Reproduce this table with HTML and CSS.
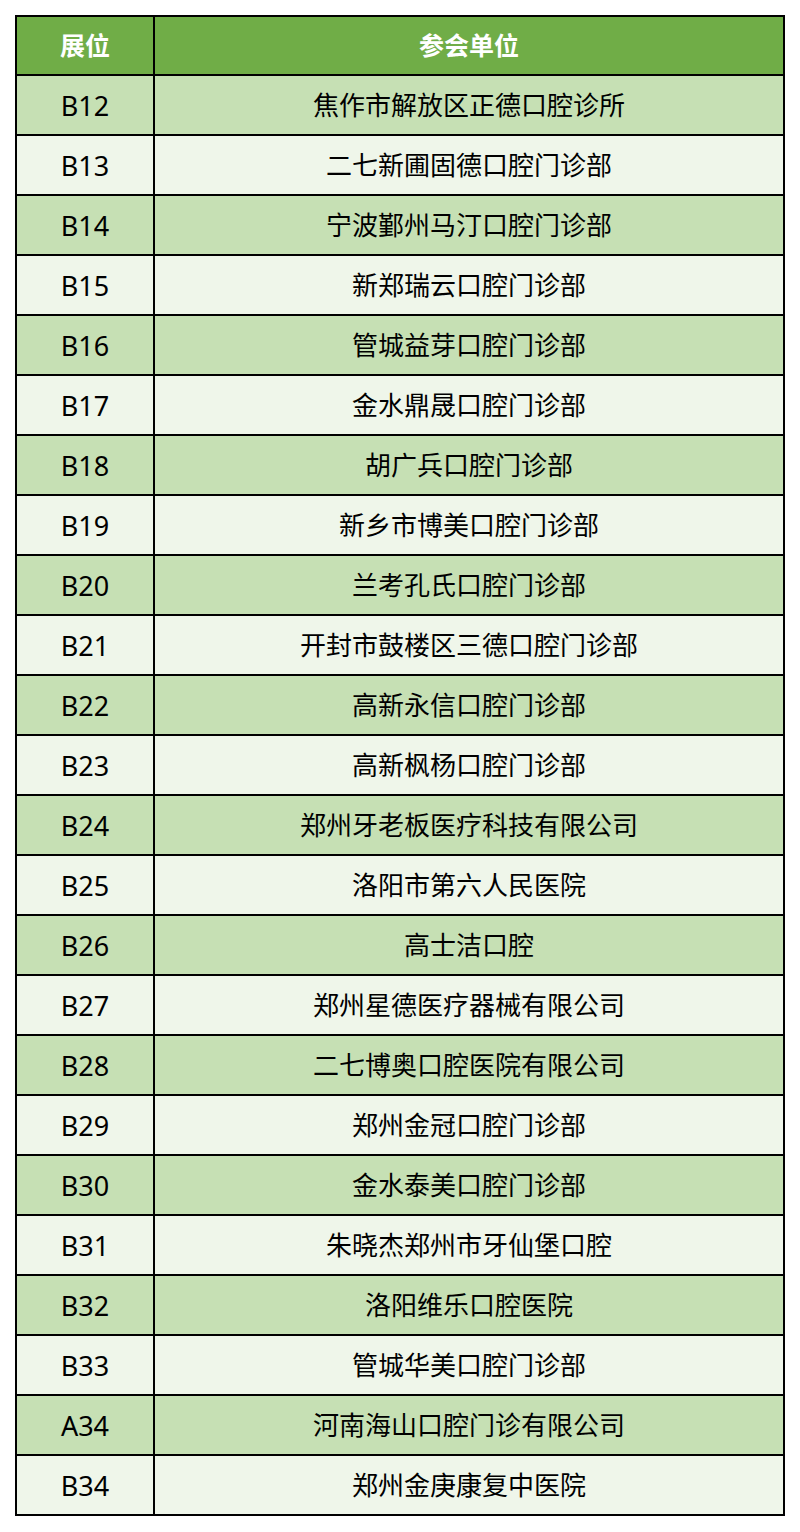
FILE: index.html
```html
<!DOCTYPE html>
<html lang="zh-CN">
<head>
<meta charset="utf-8">
<title>参会单位</title>
<link rel="stylesheet" href="styles.css">
</head>
<body>
<table class="booths">
  <colgroup><col class="c-pos"><col class="c-org"></colgroup>
  <thead>
    <tr><th>展位</th><th>参会单位</th></tr>
  </thead>
  <tbody>
    <tr class="odd"><td class="pos">B12</td><td>焦作市解放区正德口腔诊所</td></tr>
    <tr class="even"><td class="pos">B13</td><td>二七新圃固德口腔门诊部</td></tr>
    <tr class="odd"><td class="pos">B14</td><td>宁波鄞州马汀口腔门诊部</td></tr>
    <tr class="even"><td class="pos">B15</td><td>新郑瑞云口腔门诊部</td></tr>
    <tr class="odd"><td class="pos">B16</td><td>管城益芽口腔门诊部</td></tr>
    <tr class="even"><td class="pos">B17</td><td>金水鼎晟口腔门诊部</td></tr>
    <tr class="odd"><td class="pos">B18</td><td>胡广兵口腔门诊部</td></tr>
    <tr class="even"><td class="pos">B19</td><td>新乡市博美口腔门诊部</td></tr>
    <tr class="odd"><td class="pos">B20</td><td>兰考孔氏口腔门诊部</td></tr>
    <tr class="even"><td class="pos">B21</td><td>开封市鼓楼区三德口腔门诊部</td></tr>
    <tr class="odd"><td class="pos">B22</td><td>高新永信口腔门诊部</td></tr>
    <tr class="even"><td class="pos">B23</td><td>高新枫杨口腔门诊部</td></tr>
    <tr class="odd"><td class="pos">B24</td><td>郑州牙老板医疗科技有限公司</td></tr>
    <tr class="even"><td class="pos">B25</td><td>洛阳市第六人民医院</td></tr>
    <tr class="odd"><td class="pos">B26</td><td>高士洁口腔</td></tr>
    <tr class="even"><td class="pos">B27</td><td>郑州星德医疗器械有限公司</td></tr>
    <tr class="odd"><td class="pos">B28</td><td>二七博奥口腔医院有限公司</td></tr>
    <tr class="even"><td class="pos">B29</td><td>郑州金冠口腔门诊部</td></tr>
    <tr class="odd"><td class="pos">B30</td><td>金水泰美口腔门诊部</td></tr>
    <tr class="even"><td class="pos">B31</td><td>朱晓杰郑州市牙仙堡口腔</td></tr>
    <tr class="odd"><td class="pos">B32</td><td>洛阳维乐口腔医院</td></tr>
    <tr class="even"><td class="pos">B33</td><td>管城华美口腔门诊部</td></tr>
    <tr class="odd"><td class="pos">A34</td><td>河南海山口腔门诊有限公司</td></tr>
    <tr class="even"><td class="pos">B34</td><td>郑州金庚康复中医院</td></tr>
  </tbody>
</table>
</body>
</html>
```
FILE: styles.css
```css
html, body {
  margin: 0;
  padding: 0;
  background: #ffffff;
}

body {
  font-family: "Noto Sans", "Noto Sans CJK SC", sans-serif;
  color: #000000;
}

.booths {
  margin: 15px 0 0 15px;
  width: 770px;
  table-layout: fixed;
  border-collapse: separate;
  border-spacing: 2px;
  background: #000000;
}

.c-pos { width: 136px; }
.c-org { width: 628px; }

.booths th,
.booths td {
  padding: 0;
  text-align: center;
  vertical-align: middle;
  line-height: 1;
}

.booths th {
  height: 57px;
  background: #70ad47;
  color: #ffffff;
  font-weight: 700;
  font-size: 25px;
}

.booths td {
  height: 58px;
  font-size: 26px;
}

.booths td.pos {
  font-size: 27px;
}

.odd td { background: #c6e0b4; }
.even td { background: #eff6ea; }
```
